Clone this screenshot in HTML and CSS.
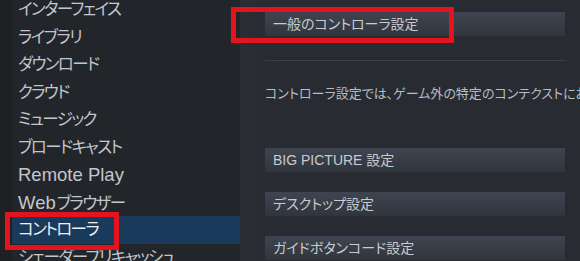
FILE: index.html
```html
<!DOCTYPE html>
<html lang="ja">
<head>
  <meta charset="UTF-8" />
  <title>設定 - コントローラ</title>
  <link rel="stylesheet" href="styles.css">
</head>
<body>
  <div class="page">

    <!-- サイドバー -->
    <div class="sidebar">
      <div class="sidebar-edge"></div>
      <ul class="nav">
        <li class="nav-item">インターフェイス</li>
        <li class="nav-item">ライブラリ</li>
        <li class="nav-item">ダウンロード</li>
        <li class="nav-item">クラウド</li>
        <li class="nav-item">ミュージック</li>
        <li class="nav-item">ブロードキャスト</li>
        <li class="nav-item"><span class="latin">Remote Play</span></li>
        <li class="nav-item"><span class="latin">Web</span>ブラウザー</li>
        <li class="nav-item active">コントローラ</li>
        <li class="nav-item">シェーダープリキャッシュ</li>
      </ul>
    </div>

    <!-- コントローラ設定 -->
    <div class="content">
      <div class="btn">一般のコントローラ設定</div>
      <hr class="divider">
      <p class="desc">コントローラ設定では、ゲーム外の特定のコンテクストにおけるコントローラの動作を設定できます。</p>
      <div class="btn-list">
        <div class="btn">BIG PICTURE 設定</div>
        <div class="btn">デスクトップ設定</div>
        <div class="btn">ガイドボタンコード設定</div>
      </div>
    </div>

    <!-- 注釈の赤枠 -->
    <div class="mark mark-nav"></div>
    <div class="mark mark-btn"></div>
  </div>
</body>
</html>
```

FILE: styles.css
```css
* { margin: 0; padding: 0; box-sizing: border-box; }
html, body {
  width: 100%;
  height: 100%;
  overflow: hidden;
  background: #282b31;
  font-family: "Liberation Sans", "Noto Sans CJK JP", sans-serif;
  font-feature-settings: "palt";
}

.page {
  position: relative;
  display: flex;
  width: 580px;
  height: 261px;
  overflow: hidden;
}

/* サイドバー */
.sidebar {
  display: flex;
  width: 240px;
  flex-shrink: 0;
  background: #22252a;
}
.sidebar-edge {
  width: 12px;
  background: #1e2024;
}
.nav {
  flex: 1;
  list-style: none;
  margin-top: -4px;
}
.nav-item {
  height: 27.5px;
  line-height: 27.5px;
  padding-left: 6px;
  font-size: 16.5px;
  letter-spacing: -1.6px;
  color: #c3c6cc;
  white-space: nowrap;
}
.nav-item .latin {
  font-size: 18.5px;
  letter-spacing: 0;
  margin-right: 1px;
}
.nav-item.active {
  background: #1a3a5b;
  color: #eceef1;
}

/* 右側 */
.content {
  flex: 1;
  padding: 12px 15px 0 25px;
  background: linear-gradient(to right, #2a2d33 0, #282b31 40px);
  min-width: 0;
}
.btn {
  width: 300px;
  height: 24px;
  line-height: 24px;
  padding-left: 8px;
  font-size: 14px;
  color: #c8cbd0;
  background: linear-gradient(to bottom, #3f4550, #30353d);
  white-space: nowrap;
}
.divider {
  width: 300px;
  margin-top: 24px;
  border: 0;
  border-top: 1px solid #3d4046;
}
.desc {
  margin-top: 23px;
  font-size: 13px;
  line-height: 20px;
  color: #b9bcc2;
  white-space: nowrap;
}
.btn-list {
  display: flex;
  flex-direction: column;
  gap: 20px;
  margin-top: 44px;
}

/* 注釈 */
.mark {
  position: absolute;
  border: 5px solid #e3141d;
}
.mark-nav {
  left: 5px;
  top: 212px;
  width: 114px;
  height: 38px;
}
.mark-btn {
  left: 231px;
  top: 7px;
  width: 223px;
  height: 36px;
}
```
